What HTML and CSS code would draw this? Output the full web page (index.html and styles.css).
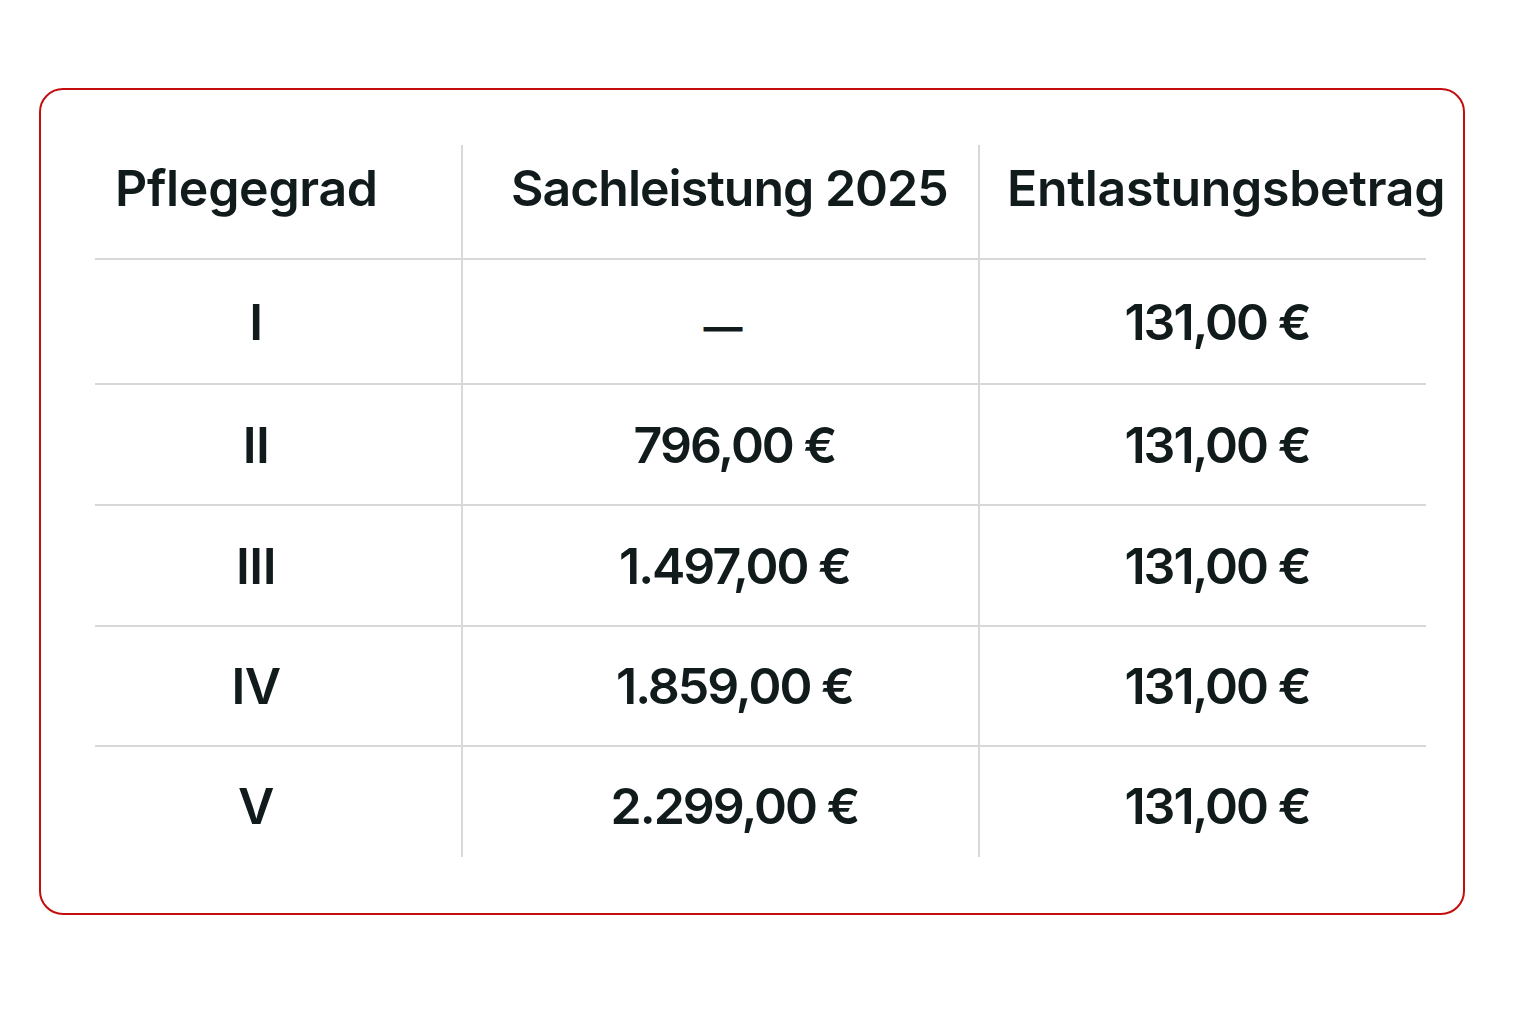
FILE: index.html
```html
<!DOCTYPE html>
<html lang="de">
<head>
<meta charset="utf-8">
<title>Pflegegrad Tabelle</title>
<link rel="stylesheet" href="styles.css">
</head>
<body>
<div class="card">
  <div class="grid">
    <div class="cell head c1">Pflegegrad</div>
    <div class="cell head c2">Sachleistung 2025</div>
    <div class="cell head c3">Entlastungsbetrag</div>

    <div class="cell r1 c1">I</div>
    <div class="cell r1 c2 dash">—</div>
    <div class="cell r1 c3">131,00 €</div>

    <div class="cell r2 c1">II</div>
    <div class="cell r2 c2">796,00 €</div>
    <div class="cell r2 c3">131,00 €</div>

    <div class="cell r3 c1">III</div>
    <div class="cell r3 c2">1.497,00 €</div>
    <div class="cell r3 c3">131,00 €</div>

    <div class="cell r4 c1">IV</div>
    <div class="cell r4 c2">1.859,00 €</div>
    <div class="cell r4 c3">131,00 €</div>

    <div class="cell r5 last c1">V</div>
    <div class="cell r5 last c2">2.299,00 €</div>
    <div class="cell r5 last c3">131,00 €</div>
  </div>
</div>
</body>
</html>
```
FILE: styles.css
```css
html, body {
  margin: 0;
  padding: 0;
  background: #ffffff;
}
body {
  font-family: "Inter", "Liberation Sans", sans-serif;
  color: #111b1b;
}
.card {
  box-sizing: border-box;
  margin: 88px 0 0 39px;
  width: 1426px;
  height: 827px;
  border: 2px solid #c40d0d;
  border-radius: 24px;
  padding: 55px 36px 54px 54px;
}
.grid {
  display: grid;
  grid-template-columns: 366px 517px 448px;
  grid-template-rows: 115px 125px 121px 121px 120px 110px;
}
.cell {
  display: flex;
  align-items: center;
  justify-content: center;
  white-space: nowrap;
  font-size: 50px;
  font-weight: 600;
  letter-spacing: -2px;
  border-bottom: 2px solid #d8d8d8;
  min-width: 0;
}
.cell.last {
  border-bottom: none;
  padding-top: 8px;
}
.c2, .c3 {
  border-left: 2px solid #d8d8d8;
}
.c1 {
  padding-right: 44px;
  letter-spacing: -0.5px;
}
.c2, .c3 {
  padding-left: 28px;
}
.dash {
  font-size: 39px;
  font-weight: 700;
  letter-spacing: 0;
  padding-left: 5px;
  padding-top: 10px;
}
.head {
  justify-content: flex-start;
  padding-bottom: 28px;
  letter-spacing: -0.3px;
}
.head.c1 {
  padding-right: 0;
  padding-left: 20px;
}
.head.c2 {
  padding-left: 48px;
  letter-spacing: -1px;
}
.head.c3 {
  padding-left: 27px;
}
```
